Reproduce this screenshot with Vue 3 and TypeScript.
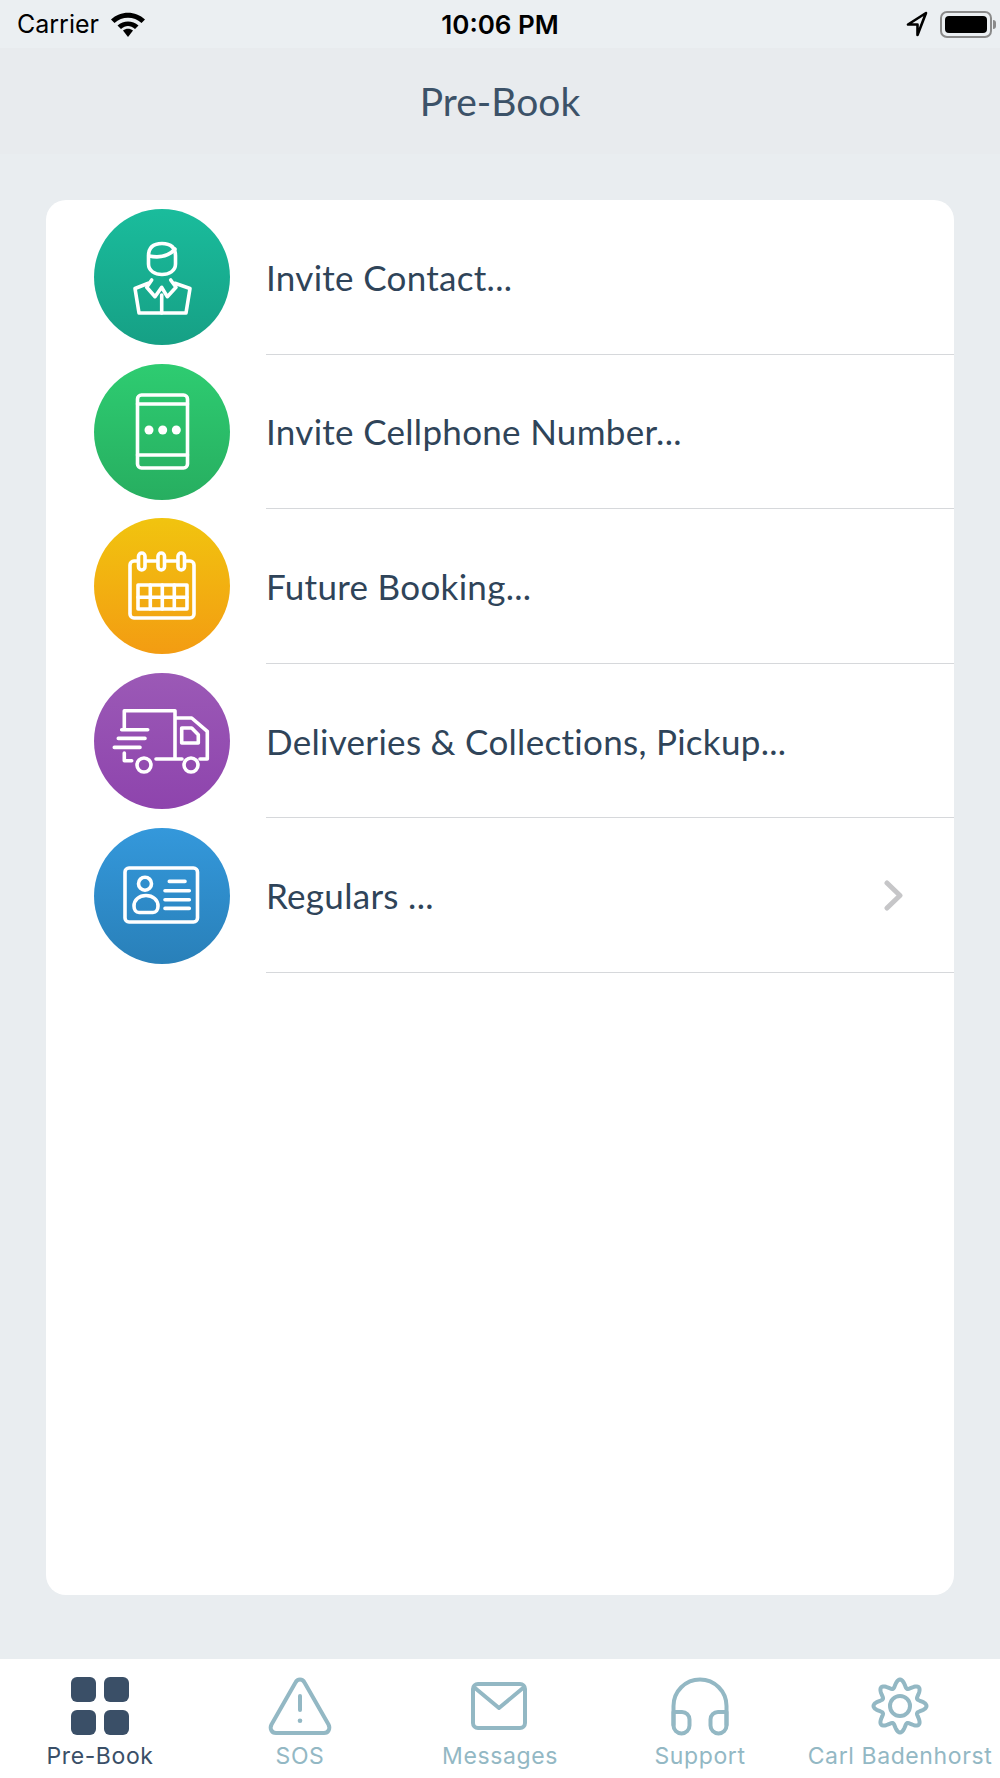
<script setup lang="ts">
interface Row {
  id: string
  label: string
  from: string
  to: string
}

const rows: Row[] = [
  { id: 'contact', label: 'Invite Contact...', from: '#1abc9c', to: '#16a085' },
  { id: 'phone', label: 'Invite Cellphone Number...', from: '#2ecc71', to: '#27ae60' },
  { id: 'future', label: 'Future Booking...', from: '#f1c40f', to: '#f39c12' },
  { id: 'delivery', label: 'Deliveries & Collections, Pickup...', from: '#9b59b6', to: '#8e44ad' },
  { id: 'regulars', label: 'Regulars ...', from: '#3498db', to: '#2980b9' },
]

const tabs = [
  { id: 'prebook', label: 'Pre-Book' },
  { id: 'sos', label: 'SOS' },
  { id: 'messages', label: 'Messages' },
  { id: 'support', label: 'Support' },
  { id: 'settings', label: 'Carl Badenhorst' },
]

// wavy outline for the settings cog, 8 lobes
function gearPath(): string {
  const pts: string[] = []
  for (let i = 0; i < 160; i++) {
    const a = (i / 160) * Math.PI * 2
    const r = 22.5 + 4 * Math.cos(8 * a)
    pts.push(`${(29 + r * Math.sin(a)).toFixed(2)} ${(29 - r * Math.cos(a)).toFixed(2)}`)
  }
  return `M${pts.join('L')}Z`
}
const gear = gearPath()
</script>

<template>
  <div class="screen">
    <div class="status-bar">
      <div class="status-left">
        <span class="carrier">Carrier</span>
        <svg class="wifi" width="36" height="28" viewBox="0 0 36 28">
          <path d="M1 9.5C10.5 .5 25.500 .5 35 9.500L31.500 13C24 6 12 6 4.500 13Z" />
          <path d="M7.500 15.500C13.500 10 22.500 10 28.500 15.500L25 19C20.500 15 15.500 15 11 19Z" />
          <path d="M13 20.500C16 18 20 18 23 20.500L18 27Z" />
        </svg>
      </div>
      <span class="time">10:06 PM</span>
      <div class="status-right">
        <svg class="arrow" width="22" height="26" viewBox="0 0 22 26">
          <path d="M20 2L2 13.500H11.500V24Z" fill="none" stroke="#000" stroke-width="2.600" stroke-linejoin="round" />
        </svg>
        <div class="battery"><i /></div>
        <b class="battery-tip" />
      </div>
    </div>

    <header class="nav-bar">Pre-Book</header>

    <main class="content">
      <section class="card">
        <div v-for="row in rows" :key="row.id" class="row">
          <div class="badge" :style="{ background: `linear-gradient(${row.from}, ${row.to})` }">
            <svg class="badge-icon" width="136" height="136" viewBox="0 0 136 136">
              <g v-if="row.id === 'contact'">
                <path d="M54.500 47C54.500 38 60 34.500 68 34.500C76 34.500 81.500 38 81.500 47V55C81.500 62 75 65.500 68 65.500C61 65.500 54.500 62 54.500 55Z" />
                <path d="M55 47C65 49 75 47 81 40" />
                <path d="M54.300 74.300L41 79.500L45 104H92L96 79.500L81 74.300" />
                <path d="M57.700 71L52.700 78.300L61 87.700L67.700 78.300L73.300 87.700L82 78.300L76.700 71M67.700 86V104" />
              </g>
              <g v-else-if="row.id === 'phone'">
                <rect x="43.500" y="31" width="50" height="73" rx="4" />
                <path d="M43.500 40H93.500M43.500 91H93.500" />
                <circle class="solid" cx="55" cy="66" r="4.500" />
                <circle class="solid" cx="68.700" cy="66" r="4.500" />
                <circle class="solid" cx="82.300" cy="66" r="4.500" />
              </g>
              <g v-else-if="row.id === 'future'">
                <rect x="36" y="43" width="64" height="57" rx="4" />
                <rect x="44" y="67" width="49" height="24" />
                <path d="M56.300 67V91M68.300 67V91M80.300 67V91M44 79.300H93" />
                <rect class="ring" x="44.500" y="35" width="6.500" height="17" rx="3.250" />
                <rect class="ring" x="64" y="35" width="6.500" height="17" rx="3.250" />
                <rect class="ring" x="84" y="35" width="6.500" height="17" rx="3.250" />
              </g>
              <g v-else-if="row.id === 'delivery'">
                <path d="M30.300 55V37.700H81V86H62M81 45H97.700L113.300 58.400V86H106M81 86H88" />
                <path d="M87.700 55H97.700L104.300 61.700V70H87.700Z" />
                <circle cx="50" cy="92" r="7" />
                <circle cx="97" cy="92" r="7" />
                <path d="M27.700 56.700H53.700M24.300 65.400H51M20.300 74.400H46M30.300 80V87.700H37.700" />
              </g>
              <g v-else>
                <rect x="31" y="40" width="72.500" height="54" rx="4" />
                <circle cx="51" cy="55.700" r="6.500" />
                <path d="M52 67.500C45 67.500 40 72 40 78C40 82 42 84.500 45 84.500H59C62 84.500 64 82 64 78C64 72 59 67.500 52 67.500Z" />
                <path d="M75.300 53.400H91M71 62.700H95.300M71 71.700H95.300M71 80.400H95.300" />
              </g>
            </svg>
          </div>
          <div class="row-body">
            <span class="row-label">{{ row.label }}</span>
            <svg v-if="row.id === 'regulars'" class="chevron" width="19" height="31" viewBox="0 0 19 31">
              <path d="M3 3L16 15.500L3 28" />
            </svg>
          </div>
        </div>
      </section>
    </main>

    <nav class="tab-bar">
      <div v-for="tab in tabs" :key="tab.id" class="tab" :class="{ active: tab.id === 'prebook' }">
        <svg class="tab-icon" width="66" height="58" viewBox="-4 0 66 58">
          <g v-if="tab.id === 'prebook'" class="fill">
            <rect x="0" y="0" width="25" height="25" rx="6" />
            <rect x="33" y="0" width="25" height="25" rx="6" />
            <rect x="0" y="33" width="25" height="25" rx="6" />
            <rect x="33" y="33" width="25" height="25" rx="6" />
          </g>
          <g v-else-if="tab.id === 'sos'">
            <path d="M24.500 5.500C26.500 1.500 31.500 1.500 33.500 5.500L57.500 47.500C59.500 51.500 57.500 56 53 56H5C.5 56 -1.500 51.500 .5 47.500Z" />
            <path d="M29 19V33" />
            <circle class="dot" cx="29" cy="43.700" r="2.300" />
          </g>
          <g v-else-if="tab.id === 'messages'">
            <rect x="2" y="7" width="52" height="44" rx="5" />
            <path d="M4 11L28 31L52 11" />
          </g>
          <g v-else-if="tab.id === 'support'">
            <path d="M2.500 48V29A26.500 26.500 0 0 1 55.500 29V48" />
            <path d="M2.500 35H11A7.500 7.500 0 0 1 18.500 42.500V48.500A8 8 0 0 1 2.500 48.500Z" />
            <path d="M55.500 35H47A7.500 7.500 0 0 0 39.500 42.500V48.500A8 8 0 0 0 55.500 48.500Z" />
          </g>
          <g v-else>
            <path :d="gear" />
            <circle cx="29" cy="29" r="10" />
          </g>
        </svg>
        <span class="tab-label">{{ tab.label }}</span>
      </div>
    </nav>
  </div>
</template>

<style scoped>
.screen {
  display: flex;
  flex-direction: column;
  width: 1000px;
  height: 1778px;
  overflow: hidden;
  background: #e9edf0;
  font-family: Lato, "Open Sans", sans-serif;
}

.status-bar {
  position: relative;
  display: flex;
  flex: none;
  align-items: center;
  justify-content: space-between;
  height: 48px;
  padding: 0 4px 0 17px;
  background: #ebeff2;
  color: #000;
  font-family: Inter, "Liberation Sans", sans-serif;
}

.status-left,
.status-right {
  display: flex;
  align-items: center;
}

.carrier {
  font-size: 25px;
  margin-right: 11px;
}

.wifi {
  fill: #000;
}

.time {
  position: absolute;
  left: 0;
  right: 0;
  text-align: center;
  font-size: 26px;
  font-weight: 600;
}

.status-right {
  gap: 12px;
}

.battery {
  box-sizing: border-box;
  width: 52px;
  height: 27px;
  padding: 3px;
  border: 2px solid #8a8a8a;
  border-radius: 7px;
}

.battery i {
  display: block;
  height: 100%;
  border-radius: 4px;
  background: #000;
}

.battery-tip {
  width: 3px;
  height: 9px;
  margin-left: -11px;
  border-radius: 0 3px 3px 0;
  background: #8a8a8a;
}

.nav-bar {
  display: flex;
  flex: none;
  align-items: center;
  justify-content: center;
  height: 106px;
  background: #e8ebee;
  color: #3c5268;
  font-size: 39px;
}

.content {
  flex: 1;
  min-height: 0;
  padding: 46px 46px 64px;
}

.card {
  height: 100%;
  box-sizing: border-box;
  border-radius: 20px;
  background: #fff;
}

.row {
  display: flex;
  align-items: center;
  height: 154.6px;
  padding-left: 48px;
}

.badge {
  flex: none;
  width: 136px;
  height: 136px;
  border-radius: 50%;
}

.badge-icon {
  display: block;
  fill: none;
  stroke: #fff;
  stroke-width: 3.600;
  stroke-linecap: round;
  stroke-linejoin: round;
}

.badge-icon .solid {
  fill: #fff;
  stroke: none;
}

.badge-icon .ring {
  fill: #f2b70f;
}

.row-body {
  display: flex;
  flex: 1;
  align-items: center;
  justify-content: space-between;
  align-self: stretch;
  box-sizing: border-box;
  margin-left: 36px;
  padding-right: 51px;
  border-bottom: 1.500px solid #d6d8db;
}

.row-label {
  color: #2f4459;
  font-size: 35px;
  letter-spacing: 0.3px;
}

.chevron {
  fill: none;
  stroke: #c6c6c8;
  stroke-width: 5;
  stroke-linecap: round;
  stroke-linejoin: round;
}

.tab-bar {
  display: flex;
  flex: none;
  height: 119px;
  background: #fff;
}

.tab {
  display: flex;
  flex: 1 1 0;
  flex-direction: column;
  align-items: center;
  padding-top: 18px;
  color: #93b8c4;
}

.tab.active {
  color: #3a4f67;
}

.tab-icon {
  display: block;
  overflow: visible;
  fill: none;
  stroke: #93b8c4;
  stroke-width: 4;
  stroke-linecap: round;
  stroke-linejoin: round;
}

.tab-icon .fill {
  fill: #3a4f67;
  stroke: none;
}

.tab-icon .dot {
  fill: #93b8c4;
  stroke: none;
}

.tab-label {
  margin-top: 7px;
  font-family: Inter, "Liberation Sans", sans-serif;
  font-size: 23px;
  letter-spacing: 0.6px;
  white-space: nowrap;
}
</style>
